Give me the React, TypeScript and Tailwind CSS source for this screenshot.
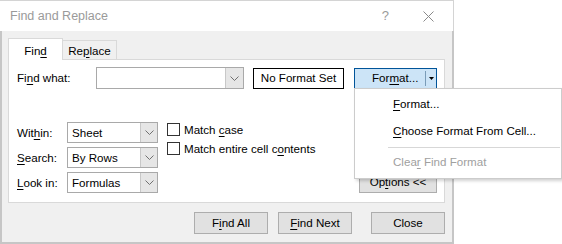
import type { ReactNode } from "react";

function U({ children }: { children: ReactNode }) {
  return <span className="underline underline-offset-2">{children}</span>;
}

function Chevron() {
  return (
    <svg width="9" height="5" viewBox="0 0 9 5" fill="none">
      <path d="M0.5 0.5 L4.5 4.5 L8.5 0.5" stroke="#707070" strokeWidth="1" />
    </svg>
  );
}

function Combo({ value, width }: { value: string; width: string }) {
  return (
    <div
      className={`${width} h-[21px] flex bg-white border border-[#a9a9a9]`}
    >
      <div className="flex-1 flex items-center pl-[4px] leading-none">{value}</div>
      <div className="w-[17px] flex items-center justify-center bg-[#e6e6e6] border-l border-[#c8c8c8]">
        <Chevron />
      </div>
    </div>
  );
}

function Button({ children, className = "" }: { children: ReactNode; className?: string }) {
  return (
    <div
      className={`h-[22px] flex items-center justify-center bg-[#e1e1e1] border border-[#adadad] leading-none ${className}`}
    >
      {children}
    </div>
  );
}

function Checkbox({ children }: { children: ReactNode }) {
  return (
    <div className="flex items-center h-[13px] gap-[4px] leading-none">
      <div className="w-[13px] h-[13px] bg-white border border-[#333333]" />
      <span>{children}</span>
    </div>
  );
}

export default function App() {
  return (
    <div className="relative w-[562px] h-[244px] bg-white text-[11.6px] text-black font-['Liberation_Sans',Arial,sans-serif]">
      <div className="w-[454px] h-[244px] flex flex-col">
        {/* Title bar */}
        <div className="h-[31px] flex items-center bg-white border-t border-r border-[#d4d4d4]">
          <span className="pl-[10px] text-[12.5px] text-[#9a9a9a]">Find and Replace</span>
          <span className="ml-auto mr-[34px] text-[13px] text-[#9a9a9a]">?</span>
          <svg className="mr-[19px]" width="11" height="11" viewBox="0 0 11 11">
            <path d="M0.5 0.5 L10.5 10.5 M10.5 0.5 L0.5 10.5" stroke="#8a8a8a" strokeWidth="1" />
          </svg>
        </div>

        {/* Body */}
        <div className="flex-1 flex flex-col bg-[#f0f0f0] border-l-[2px] border-r-[2px] border-b-[2px] border-[#c6c6c6]">
          {/* Tabs */}
          <div className="flex items-end ml-[6px] mt-[7px] h-[21px]">
            <div className="w-[55px] h-[22px] -mb-px z-10 flex items-center justify-center pt-[2px] bg-white border-t border-l border-r border-[#d9d9d9]">
              Fin<U>d</U>
            </div>
            <div className="w-[54px] h-[19px] flex items-center justify-center pt-[1px] bg-[#f0f0f0] border-t border-r border-[#d9d9d9]">
              Re<U>p</U>lace
            </div>
          </div>

          {/* Panel */}
          <div className="ml-[6px] w-[437px] h-[144px] flex flex-col bg-white border border-[#d9d9d9] pl-[8px] pr-[7px] pt-[7px]">
            <div className="flex items-center h-[22px]">
              <span className="w-[79px]">
                Fi<U>n</U>d what:
              </span>
              <div className="w-[148px] h-[22px] flex bg-white border border-[#a9a9a9]">
                <div className="flex-1" />
                <div className="w-[18px] flex items-center justify-center bg-[#e6e6e6] border-l border-[#c8c8c8]">
                  <Chevron />
                </div>
              </div>
              <div className="ml-[9px] w-[91px] h-[21px] flex items-center justify-center bg-white border border-black leading-none">
                No Format Set
              </div>
              <div className="ml-[10px] w-[83px] h-[21px] flex items-center bg-[#cce4f7] border border-[#005499] leading-none">
                <span className="w-[70px] pl-[17px]">
                  For<U>m</U>at...
                </span>
                <div className="w-px h-[15px] bg-[#7a9cb8]" />
                <svg className="ml-[3px]" width="5" height="3" viewBox="0 0 5 3">
                  <path d="M0 0 H5 L2.5 3 Z" fill="#000" />
                </svg>
              </div>
            </div>

            <div className="flex mt-[33px]">
              <div className="flex flex-col gap-[4px]">
                <div className="flex items-center">
                  <span className="w-[50px]">
                    Wit<U>h</U>in:
                  </span>
                  <Combo value="Sheet" width="w-[91px]" />
                </div>
                <div className="flex items-center">
                  <span className="w-[50px]">
                    <U>S</U>earch:
                  </span>
                  <Combo value="By Rows" width="w-[91px]" />
                </div>
                <div className="flex items-center">
                  <span className="w-[50px]">
                    <U>L</U>ook in:
                  </span>
                  <Combo value="Formulas" width="w-[91px]" />
                </div>
              </div>

              <div className="ml-[9px] pt-[1px] flex flex-col gap-[6px]">
                <Checkbox>
                  Match <U>c</U>ase
                </Checkbox>
                <Checkbox>
                  Match entire cell c<U>o</U>ntents
                </Checkbox>
              </div>

              <div className="ml-auto flex items-end">
                <Button className="w-[78px] h-[21px]">
                  Op<U>t</U>ions &lt;&lt;
                </Button>
              </div>
            </div>
          </div>

          {/* Bottom buttons */}
          <div className="flex justify-end mt-[9px] pr-[7px]">
            <Button className="w-[74px]">
              F<U>i</U>nd All
            </Button>
            <Button className="w-[74px] ml-[10px]">
              <U>F</U>ind Next
            </Button>
            <Button className="w-[74px] ml-[19px]">Close</Button>
          </div>
        </div>
      </div>

      {/* Dropdown menu */}
      <div className="absolute left-[354px] top-[88px] w-[208px] h-[91px] flex flex-col bg-white border border-[#cccccc] shadow-[2px_2px_3px_rgba(0,0,0,0.18)] pt-[1px]">
        <div className="h-[27px] flex items-center pl-[38px]">
          <span>
            <U>F</U>ormat...
          </span>
        </div>
        <div className="h-[27px] flex items-center pl-[38px]">
          <span>
            <U>C</U>hoose Format From Cell...
          </span>
        </div>
        <div className="mt-[3px] ml-[33px] mr-[1px] h-px bg-[#d7d7d7]" />
        <div className="h-[28px] flex items-center pl-[38px] text-[#a0a0a0]">
          <span>
            Clea<U>r</U> Find Format
          </span>
        </div>
      </div>
    </div>
  );
}
